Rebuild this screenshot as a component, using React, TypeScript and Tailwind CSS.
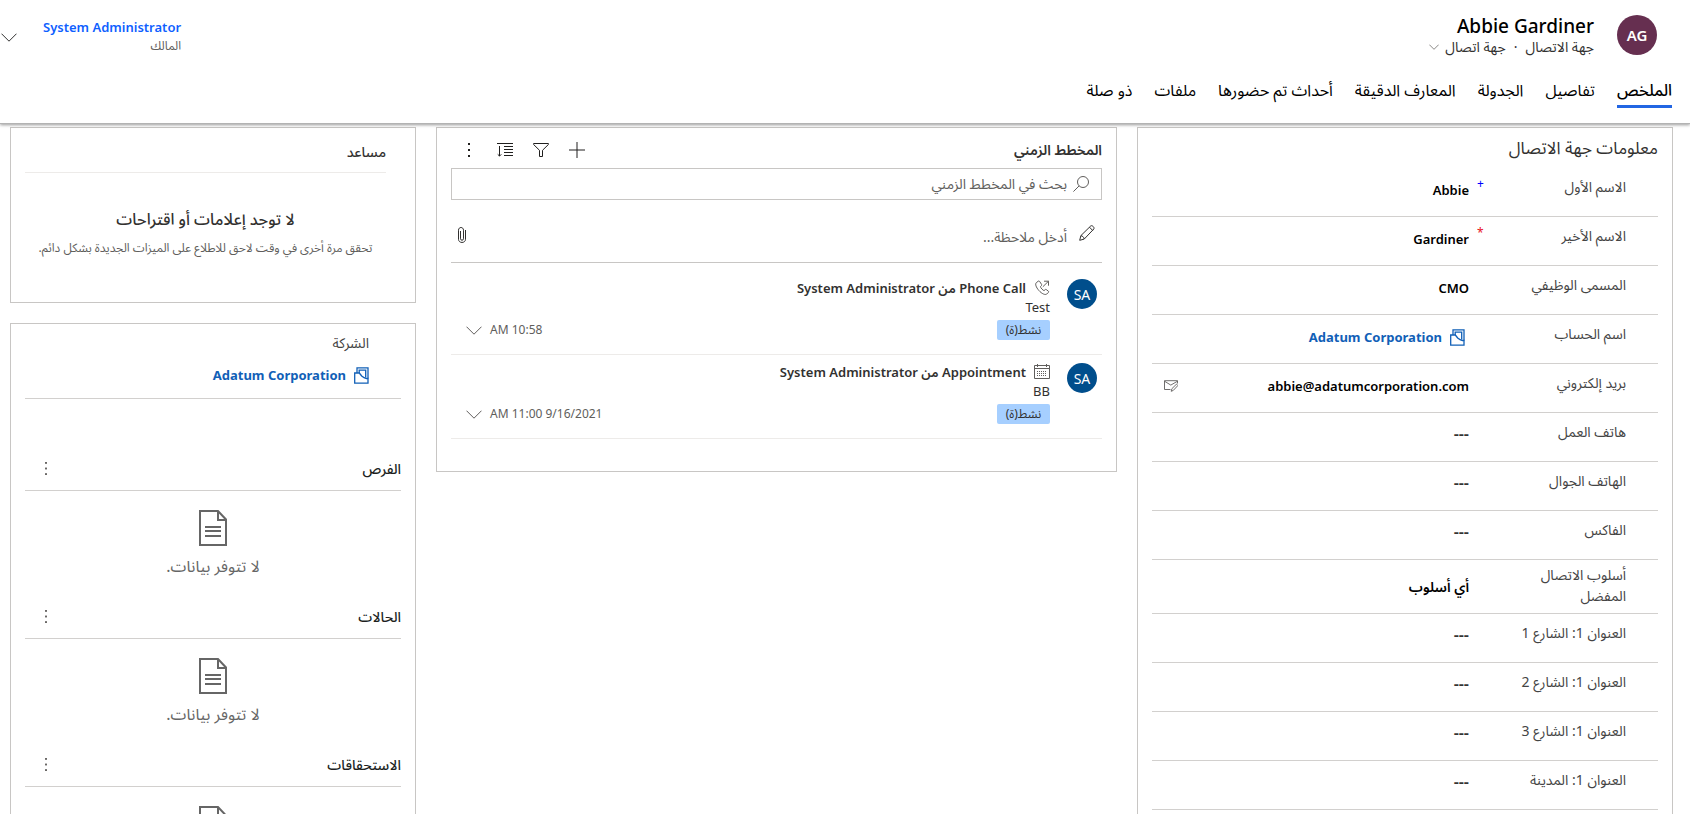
import React from 'react';

type IconProps = { className?: string };

function ChevronIcon({ className }: IconProps) {
  return (
    <svg viewBox="0 0 16 9" fill="none" stroke="currentColor" className={className} aria-hidden="true">
      <path vectorEffect="non-scaling-stroke" d="M.5.7 8 8.2 15.500.7" />
    </svg>
  );
}

function AccountIcon({ className }: IconProps) {
  return (
    <svg viewBox="0 0 15 17" fill="none" stroke="currentColor" strokeWidth="1.300" className={className} aria-hidden="true">
      <path d="M3 6V.8h11v10.700" />
      <path d="M5.200 6V3.100h6.500v7.500" />
      <path d="M.7 6h4.600l2.400 3c1.400 1.400 3 2.300 4.800 2.500H14v4.700H.7z" />
    </svg>
  );
}

function MailEditIcon({ className }: IconProps) {
  return (
    <svg viewBox="0 0 14 12" fill="none" stroke="currentColor" strokeWidth="0.900" className={className} aria-hidden="true">
      <path d="M6.500 9.500H.5V.7h13v2.800" />
      <path d="M.5 1.200l6.300 3.900 6.700-3.900" />
      <path d="M7.200 11.300l.7-2.600 4.600-4.600 1.300 1.500-4.500 4.800z" />
    </svg>
  );
}

function DotsIcon({ className }: IconProps) {
  return (
    <svg viewBox="0 0 2 14" fill="currentColor" className={className} aria-hidden="true">
      <rect width="2" height="2" />
      <rect y="6" width="2" height="2" />
      <rect y="12" width="2" height="2" />
    </svg>
  );
}

function PlusIcon() {
  return (
    <svg viewBox="0 0 16 16" fill="none" stroke="currentColor" className="size-4" aria-hidden="true">
      <path d="M8 0v16M0 8h16" />
    </svg>
  );
}

function FilterIcon() {
  return (
    <svg viewBox="0 0 16 16" fill="none" stroke="currentColor" className="size-4" aria-hidden="true">
      <path d="M.6 1.500h14.800v1l-5.900 5.800v6.200h-3V8.300L.6 2.500z" />
    </svg>
  );
}

function SortIcon() {
  return (
    <svg viewBox="0 0 16 16" fill="none" stroke="currentColor" className="size-4" aria-hidden="true">
      <path d="M0 1.500h16M7 4.500h9M7 7.500h9M7 10.500h9M7 13.500h9M2.500 4v10M.7 12.300l1.800 1.800 1.800-1.800" />
    </svg>
  );
}

function SearchIcon() {
  return (
    <svg viewBox="0 0 16 16" fill="none" stroke="currentColor" className="size-4 text-[#605e5c]" aria-hidden="true">
      <circle cx="10" cy="6" r="5.500" />
      <path d="M6.100 9.900.4 15.600" />
    </svg>
  );
}

function PencilIcon() {
  return (
    <svg viewBox="0 0 16 16" fill="none" stroke="currentColor" className="size-4 text-[#323130]" aria-hidden="true">
      <path d="M.7 15.300l1.200-4.700L11.800.9c1.300-1 4 1.500 3 3.100L5.200 14.100z" />
      <path d="M10.500 2.200l3.200 3.300M1.900 10.700c1.700.2 3 1.500 3.300 3.300" />
    </svg>
  );
}

function ClipIcon() {
  return (
    <svg viewBox="0 0 8 16" fill="none" stroke="currentColor" className="h-4 w-2 text-[#323130]" aria-hidden="true">
      <path d="M7.500 3v9.300c0 4.200-7 4.200-7 0V3.200C.5-.4 5.500-.4 5.500 3.200v8.600c0 1.900-3 1.900-3 0V4" />
    </svg>
  );
}

function PhoneIcon() {
  return (
    <svg viewBox="0 0 16 16" fill="none" stroke="currentColor" className="size-4 text-[#605e5c]" aria-hidden="true">
      <path d="M4.200 1.200 2.300 2.700C.9 4 2 7.200 4.900 10.500s6.300 4.700 7.800 3.600l1.700-1.700c.4-.4.3-1-.1-1.300l-2-1.500c-.4-.3-.9-.3-1.200.1l-1 .9c-.7.3-4-3.200-3.600-4l1-1.100c.3-.4.3-.8 0-1.200L5.600 1.400c-.4-.5-1-.5-1.400-.2z" />
      <path d="M8.800 6.800 14.500 1.200M10 1.200h4.500v4.500" />
    </svg>
  );
}

function CalendarIcon() {
  return (
    <svg viewBox="0 0 16 16" fill="none" stroke="currentColor" className="size-4 text-[#605e5c]" aria-hidden="true">
      <path d="M.5 1.500h15v13H.5zM.5 4.500h15M3.500 0v3M12.500 0v3" />
      <path d="M3 7.500h10M3 9.500h10M3 11.500h10" strokeDasharray="1 1" />
    </svg>
  );
}

function DocumentIcon() {
  return (
    <svg viewBox="0 0 28 36" fill="none" stroke="currentColor" strokeWidth="2" className="h-9 w-7" aria-hidden="true">
      <path d="M1 1h18l8 8.500V35H1z" />
      <path d="M19 1v9h8" />
      <path d="M6 17h16M6 21h16M6 26h16" />
    </svg>
  );
}

const tabs = ['الملخص', 'تفاصيل', 'الجدولة', 'المعارف الدقيقة', 'أحداث تم حضورها', 'ملفات', 'ذو صلة'];

type Field = {
  id: string;
  label: string;
  value?: string;
  mark?: 'recommended' | 'required';
  kind?: 'lookup' | 'select' | 'email';
};

const fields: Field[] = [
  { id: 'first', label: 'الاسم الأول', value: 'Abbie', mark: 'recommended' },
  { id: 'last', label: 'الاسم الأخير', value: 'Gardiner', mark: 'required' },
  { id: 'job', label: 'المسمى الوظيفي', value: 'CMO' },
  { id: 'account', label: 'اسم الحساب', value: 'Adatum Corporation', kind: 'lookup' },
  { id: 'email', label: 'بريد إلكتروني', value: 'abbie@adatumcorporation.com', kind: 'email' },
  { id: 'work', label: 'هاتف العمل' },
  { id: 'mobile', label: 'الهاتف الجوال' },
  { id: 'fax', label: 'الفاكس' },
  { id: 'method', label: 'أسلوب الاتصال المفضل', value: 'أي أسلوب', kind: 'select' },
  { id: 'street1', label: 'العنوان 1: الشارع 1' },
  { id: 'street2', label: 'العنوان 1: الشارع 2' },
  { id: 'street3', label: 'العنوان 1: الشارع 3' },
  { id: 'city', label: 'العنوان 1: المدينة' },
];

function AccountLink({ id }: { id?: string }) {
  return (
    <a id={id} href="#account" className="flex items-center gap-2 text-[13px] leading-5 font-bold text-[#1160b7]">
      <AccountIcon className="h-[17px] w-[15px]" />
      Adatum Corporation
    </a>
  );
}

function FieldRow({ field }: { field: Field }) {
  const { id, label, value, mark, kind } = field;
  return (
    <div className="flex min-h-[49px] border-b border-[#d2d0ce] ps-8">
      <label htmlFor={id} className="w-[126px] shrink-0 pt-1 pb-[7px] text-[14px] leading-[21px] text-[#444]">
        <span className={kind === 'select' ? 'block' : 'block pt-1'}>{label}</span>
      </label>
      <div className="w-[31px] shrink-0 pe-2 pt-[6px] text-end text-[12px] leading-5">
        {mark === 'recommended' && <span className="text-[#0000ff]">+</span>}
        {mark === 'required' && <span className="text-[#e81123]">*</span>}
      </div>
      <div className={kind === 'select' ? 'flex flex-1 items-center' : 'flex flex-1 items-start pt-3'}>
        {kind === 'lookup' && (
          <div className="ps-1">
            <AccountLink id={id} />
          </div>
        )}
        {kind === 'select' && (
          <select id={id} className="appearance-none bg-transparent text-[14px] leading-6 font-semibold text-black outline-none">
            <option>{value}</option>
          </select>
        )}
        {kind !== 'lookup' && kind !== 'select' && (
          <input
            id={id}
            type="text"
            defaultValue={value}
            placeholder="---"
            className="h-5 min-w-0 flex-1 bg-transparent text-[13px] leading-5 font-semibold text-black outline-none placeholder:text-[16px] placeholder:text-[#333] placeholder:opacity-100"
          />
        )}
        {kind === 'email' && (
          <button type="button" aria-label="إرسال بريد إلكتروني" className="me-3 pt-1 text-[#605e5c]">
            <MailEditIcon className="h-3 w-[14px]" />
          </button>
        )}
      </div>
    </div>
  );
}

function TimelineItem({ icon, kind, subject, time }: { icon: React.ReactNode; kind: string; subject: string; time: string }) {
  return (
    <li className="flex h-[84px] border-b border-[#edebe9] ps-[5px] pt-2">
      <div className="flex size-[30px] shrink-0 items-center justify-center rounded-full bg-[#004e8c] text-[14px] text-white">SA</div>
      <div className="ms-[17px] min-w-0 flex-1">
        <div className="flex items-center gap-2 text-[13px] leading-[18px] font-semibold text-[#323130]">
          {icon}
          <span>{kind} من System Administrator</span>
        </div>
        <div className="text-[13px] leading-[21px] text-[#323130]">{subject}</div>
        <div className="flex items-center justify-between pt-[2px]">
          <span className="flex h-5 w-[53px] items-center justify-center rounded-[2px] bg-[#a6cfff] text-[12px] text-[#323130]">نشط(ة)</span>
          <button type="button" className="me-[15px] flex items-center gap-2 text-[12px] leading-4 text-[#605e5c]">
            <span>{time}</span>
            <ChevronIcon className="h-[9px] w-4" />
          </button>
        </div>
      </div>
    </li>
  );
}

function EmptySection({ title, message }: { title: string; message?: string }) {
  return (
    <section className="flex h-[148px] flex-col">
      <div className="flex h-[44px] items-center justify-between border-b border-[#d2d0ce]">
        <h2 className="text-[14px] leading-[44px] font-medium text-[#201f1e]">{title}</h2>
        <button type="button" aria-label={'المزيد من أوامر ' + title} className="flex h-10 items-center px-5 text-[#605e5c]">
          <DotsIcon className="h-[13px] w-[2px]" />
        </button>
      </div>
      <div className="flex flex-col items-center gap-[10px] pt-[19px] text-[#666]">
        <DocumentIcon />
        {message && <p className="text-[16px] leading-5">{message}</p>}
      </div>
    </section>
  );
}

export default function App() {
  return (
    <div dir="rtl" className="flex h-screen flex-col overflow-hidden bg-white font-['Noto_Sans','Noto_Sans_Arabic','Open_Sans',sans-serif] text-[#323130]">
      <header className="relative shrink-0 border-b border-[#b3b3b3] bg-white shadow-[0_1px_3px_rgba(0,0,0,0.4)]">
        <div className="flex items-start justify-between">
          <div className="flex items-start ps-[33px] pt-[15px]">
            <div className="flex size-10 items-center justify-center rounded-full bg-[#662f50] text-[15px] font-semibold text-white">AG</div>
            <div className="ms-[23px]">
              <h1 className="text-[19px] leading-[22px] font-medium text-black">Abbie Gardiner</h1>
              <div className="flex items-center text-[14px] leading-[20px] text-[#323130]">
                <span>جهة الاتصال</span>
                <span className="px-2">·</span>
                <button type="button" className="flex items-center gap-[6px]">
                  جهة اتصال
                  <ChevronIcon className="h-[6px] w-[10px] text-[#8a8886]" />
                </button>
              </div>
            </div>
          </div>
          <div className="flex items-start gap-[26px] pt-[17px]">
            <div className="text-start">
              <a href="#owner" className="block text-[13px] leading-5 font-semibold text-[#0f5fff]">System Administrator</a>
              <div className="text-[12px] leading-[18px] text-[#605e5c]">المالك</div>
            </div>
            <button type="button" aria-label="توسيع الرأس" className="pt-4 text-[#323130]">
              <ChevronIcon className="me-px h-[9px] w-4" />
            </button>
          </div>
        </div>
        <nav className="flex gap-[22px] ps-[18px] pt-5 pb-[15px]">
          {tabs.map((tab, i) => (
            <a
              key={tab}
              href={'#tab-' + i}
              className={
                i === 0
                  ? 'border-b-[3px] border-[#2266e3] pb-[2px] text-[16px] leading-[26px] font-medium text-black'
                  : 'border-b-[3px] border-transparent pb-[2px] text-[16px] leading-[26px] text-black'
              }
            >
              {tab}
            </a>
          ))}
        </nav>
      </header>

      <main className="grid min-h-0 flex-1 grid-cols-[536fr_681fr_406fr] items-start gap-5 overflow-y-auto ps-[17px] pe-[10px] pt-[3px] [scrollbar-width:none]">
        <form className="border border-[#c8c6c4] px-[14px] pb-4">
          <h2 className="pt-[7px] text-[17px] leading-[25px]">معلومات جهة الاتصال</h2>
          <div className="pt-2">
            {fields.map((field) => (
              <FieldRow key={field.id} field={field} />
            ))}
          </div>
        </form>

        <section className="border border-[#c8c6c4] px-[14px] pb-8">
          <div className="flex h-10 items-center justify-between pt-1">
            <h2 className="text-[14px] leading-5 font-semibold">المخطط الزمني</h2>
            <div className="flex items-center gap-5 pe-[10px] text-[#201f1e]">
              <button type="button" aria-label="إنشاء سجل"><PlusIcon /></button>
              <button type="button" aria-label="تصفية"><FilterIcon /></button>
              <button type="button" aria-label="فرز"><SortIcon /></button>
              <button type="button" aria-label="المزيد" className="flex w-4 justify-center">
                <DotsIcon className="h-[14px] w-[2px]" />
              </button>
            </div>
          </div>
          <div className="flex h-8 items-center gap-[6px] border border-[#c8c6c4] ps-3">
            <SearchIcon />
            <input
              type="search"
              aria-label="بحث في المخطط الزمني"
              placeholder="بحث في المخطط الزمني"
              className="min-w-0 flex-1 bg-transparent text-[14px] leading-5 outline-none placeholder:text-[#605e5c] placeholder:opacity-100"
            />
          </div>
          <div className="flex h-[63px] items-start gap-3 border-b border-[#c8c6c4] px-[7px] pt-[25px]">
            <PencilIcon />
            <input
              type="text"
              aria-label="أدخل ملاحظة"
              placeholder="أدخل ملاحظة..."
              className="min-w-0 flex-1 bg-transparent text-[14px] leading-6 outline-none placeholder:text-[#605e5c] placeholder:opacity-100"
            />
            <button type="button" aria-label="إرفاق ملف" className="pt-[2px]"><ClipIcon /></button>
          </div>
          <ul className="pt-2">
            <TimelineItem icon={<PhoneIcon />} kind="Phone Call" subject="Test" time="10:58 AM" />
            <TimelineItem icon={<CalendarIcon />} kind="Appointment" subject="BB" time="9/16/2021 11:00 AM" />
          </ul>
        </section>

        <div className="flex flex-col gap-5">
          <section className="h-[176px] border border-[#c8c6c4] ps-[29px] pe-[14px] pt-[8px]">
            <h2 className="border-b border-[#edebe9] pt-1 pb-2 text-[14px] leading-6 font-medium">مساعد</h2>
            <div className="pt-[34px] text-center">
              <p className="text-[16px] leading-6 font-medium">لا توجد إعلامات أو اقتراحات</p>
              <p className="pt-[5px] text-[12px] leading-6 text-[#605e5c]">تحقق مرة أخرى في وقت لاحق للاطلاع على الميزات الجديدة بشكل دائم.</p>
            </div>
          </section>
          <section className="border border-[#c8c6c4] px-[14px] pb-4">
            <div className="border-b border-[#d2d0ce] ps-8 pt-2 pb-[13px]">
              <div className="pb-[11px] text-[14px] leading-[22px] text-[#444]">الشركة</div>
              <AccountLink />
            </div>
            <div className="pt-12">
              <EmptySection title="الفرص" message="لا تتوفر بيانات." />
              <EmptySection title="الحالات" message="لا تتوفر بيانات." />
              <EmptySection title="الاستحقاقات" />
            </div>
          </section>
        </div>
      </main>
    </div>
  );
}
